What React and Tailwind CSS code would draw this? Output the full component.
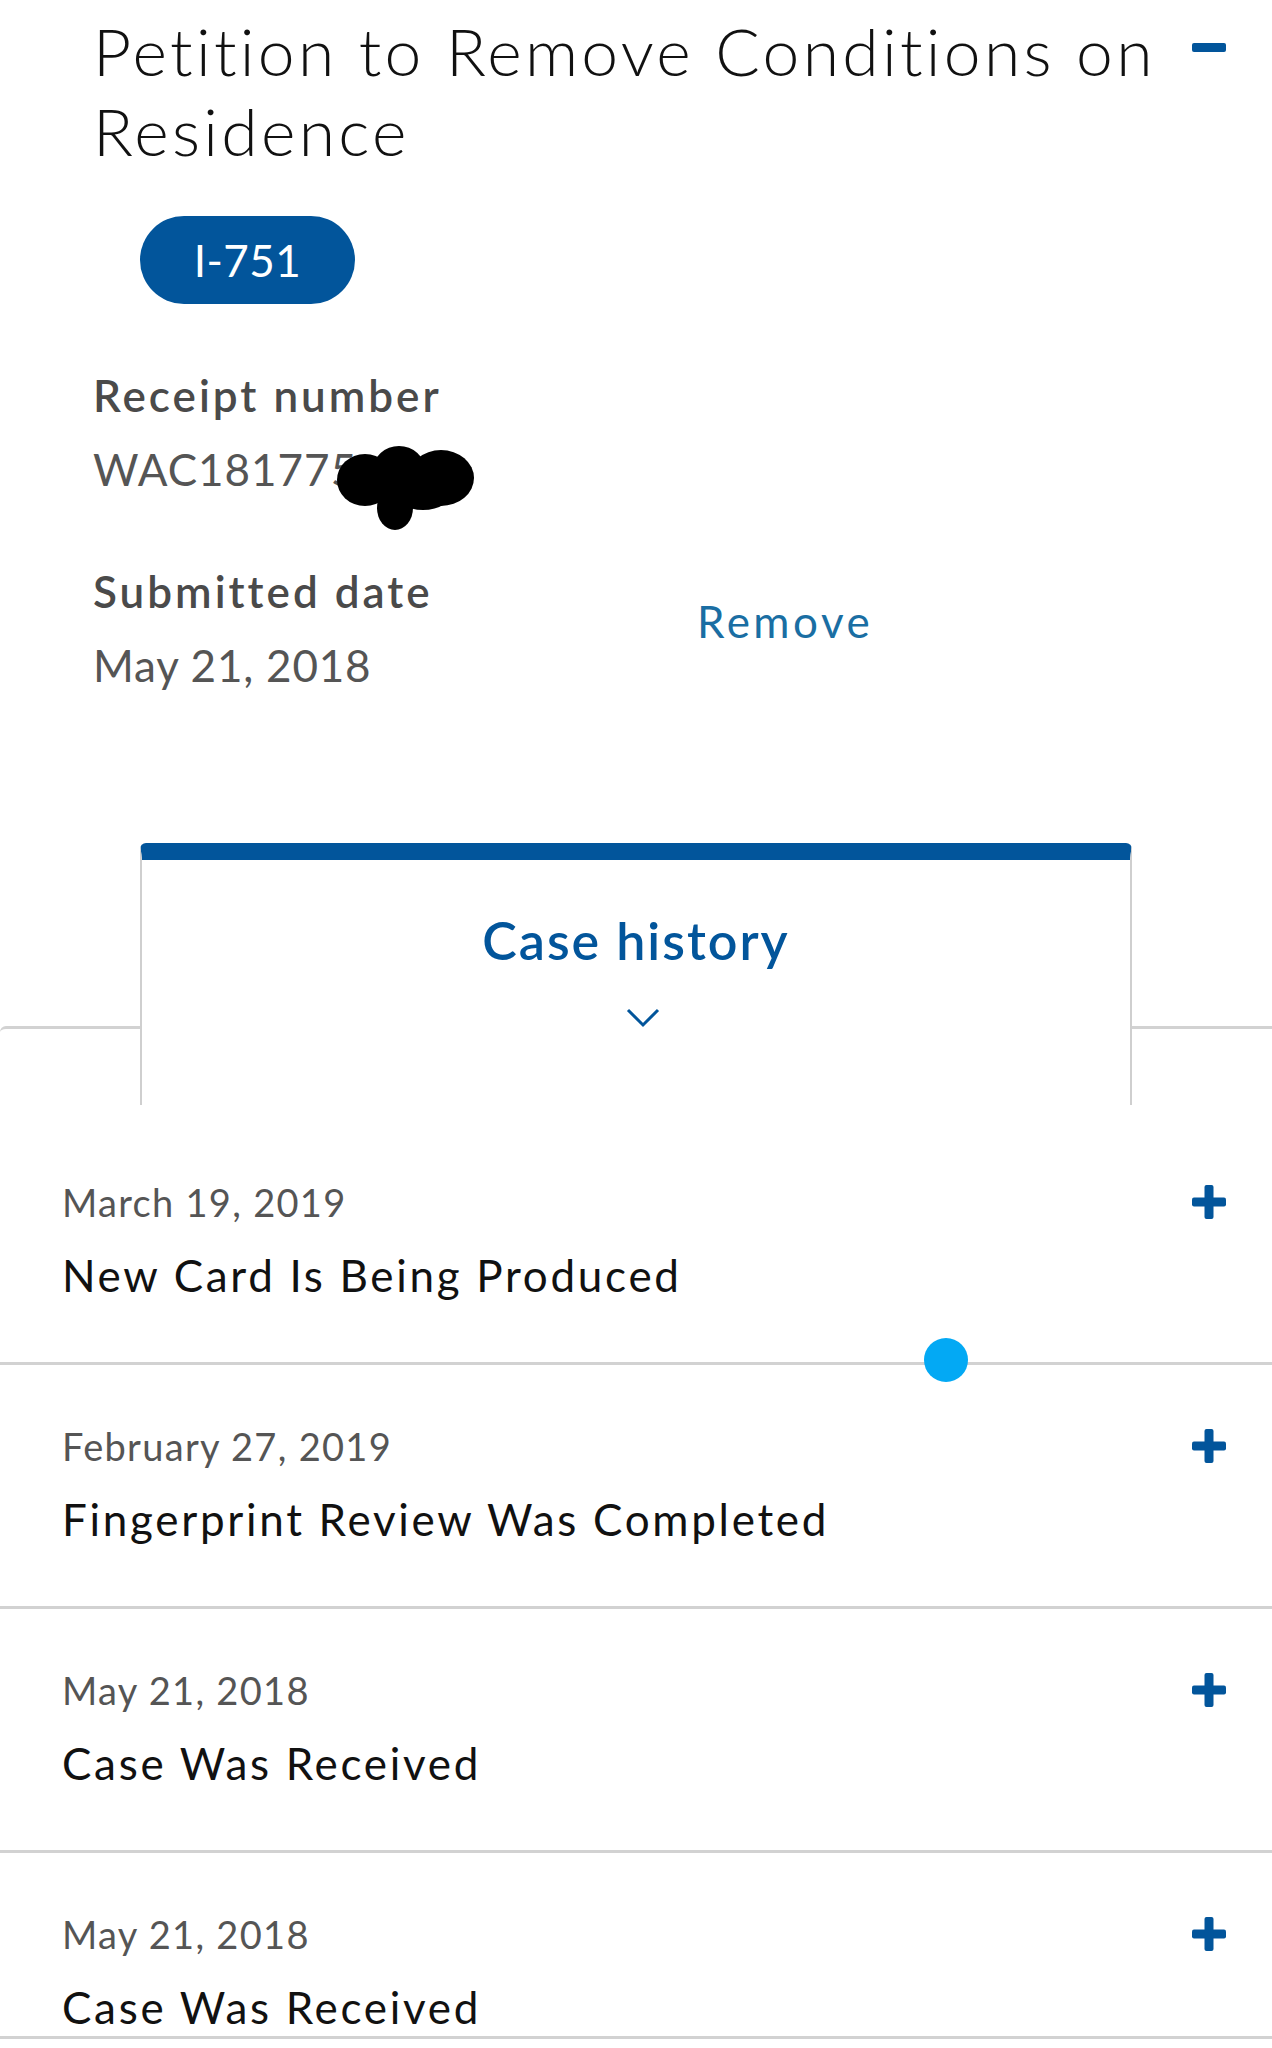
import { useState } from 'react';

const EVENTS = [
  { date: 'March 19, 2019', title: 'New Card Is Being Produced' },
  { date: 'February 27, 2019', title: 'Fingerprint Review Was Completed' },
  { date: 'May 21, 2018', title: 'Case Was Received' },
  { date: 'May 21, 2018', title: 'Case Was Received' },
];

function PlusIcon() {
  return (
    <svg width="34" height="34" viewBox="0 0 34 34" className="shrink-0">
      <rect x="0" y="12.5" width="34" height="9" rx="2" fill="#02559b" />
      <rect x="12.5" y="0" width="9" height="34" rx="2" fill="#02559b" />
    </svg>
  );
}

function Redaction() {
  return (
    <svg width="140" height="92" viewBox="0 0 140 92" className="absolute left-[244px] top-[-3px]">
      <ellipse cx="28" cy="40" rx="28" ry="26" fill="#000" />
      <ellipse cx="62" cy="30" rx="26" ry="24" fill="#000" />
      <ellipse cx="104" cy="38" rx="33" ry="28" fill="#000" />
      <ellipse cx="86" cy="50" rx="30" ry="20" fill="#000" />
      <ellipse cx="58" cy="68" rx="18" ry="22" fill="#000" />
    </svg>
  );
}

export default function App() {
  const [open, setOpen] = useState(true);

  return (
    <div className="w-[1272px] min-h-[2048px] bg-white overflow-hidden" style={{ fontFamily: 'Lato, "Noto Sans", sans-serif' }}>
      {/* Form header */}
      <div className="pl-[93px] pr-[46px] pt-[11px]">
        <div className="flex items-start">
          <h1 className="flex-1 mr-[8px] text-[66px] leading-[80px] font-light tracking-[3.3px] text-[#111]">
            Petition to Remove Conditions on Residence
          </h1>
          <button onClick={() => setOpen(!open)} className="mt-[32px] w-[34px] h-[9px] rounded-[2px] bg-[#02559b]" />
        </div>

        <div className="mt-[45px] ml-[47px] w-[215px] h-[88px] rounded-full bg-[#02559b] flex items-center justify-center text-white text-[44px] leading-none tracking-[0.5px]">
          I-751
        </div>

        <div className="mt-[65px] text-[44px] leading-[52px] font-semibold tracking-[3px] text-[#4a4a4a]">Receipt number</div>
        <div className="relative mt-[22px] text-[44px] leading-[52px] tracking-[1px] text-[#555]">
          WAC181775
          <Redaction />
        </div>

        <div className="flex items-start mt-[70px]">
          <div className="w-[604px]">
            <div className="text-[44px] leading-[52px] font-semibold tracking-[3px] text-[#4a4a4a]">Submitted date</div>
            <div className="mt-[22px] text-[44px] leading-[52px] tracking-[0.8px] text-[#555]">May 21, 2018</div>
          </div>
          <a className="mt-[30px] text-[44px] leading-[52px] tracking-[3.5px] text-[#1a6ea3]">Remove</a>
        </div>
      </div>

      {/* Case history tab */}
      <div className="mt-[152px]">
        <div className="relative z-10 mx-[140px] h-[262px] bg-white rounded-t-[6px] border-t-[17px] border-x-2 border-t-[#02559b] border-x-[#cfcfcf] flex flex-col items-center pt-[50px]">
          <div className="text-[52px] leading-[60px] font-semibold tracking-[2px] text-[#02559b]">Case history</div>
          <svg width="34" height="20" viewBox="0 0 34 20" className="mt-[38px] ml-[14px]">
            <polyline points="2,2 17,17 32,2" fill="none" stroke="#02559b" strokeWidth="3" />
          </svg>
        </div>

        <div className="relative -mt-[79px] pt-[92px] border-t-[3px] border-[#d2d2d2] rounded-tl-[6px]">
          {EVENTS.map((e, i) => (
            <div
              key={i}
              className={
                i === EVENTS.length - 1
                  ? 'pl-[62px] pr-[46px] pt-[58px] pb-[3px] border-b-[3px] border-[#d2d2d2]'
                  : 'pl-[62px] pr-[46px] pt-[58px] pb-[61px] border-b-[3px] border-[#d2d2d2]'
              }
            >
              <div className="flex items-center justify-between">
                <div className="text-[38px] leading-[46px] tracking-[1.3px] text-[#555]">{e.date}</div>
                <PlusIcon />
              </div>
              <div className="mt-[24px] text-[44px] leading-[52px] tracking-[2.7px] text-[#111]">{e.title}</div>
            </div>
          ))}
          {/* touch indicator */}
          <div className="absolute left-[924px] top-[309px] w-[44px] h-[44px] rounded-full bg-[#03a9f4]" />
        </div>
      </div>
    </div>
  );
}
